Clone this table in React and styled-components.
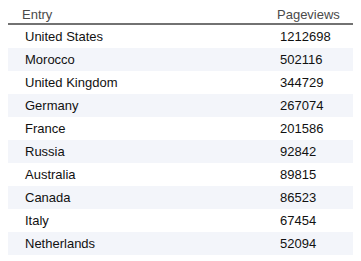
import React from "react";
import styled, { createGlobalStyle } from "styled-components";

const Global = createGlobalStyle`
	body {
		margin: 0 8px;
		background: #fff;
		font-family: "Liberation Sans", Arial, sans-serif;
		font-size: 13px;
	}
`;

const Table = styled.table`
	width: 347px;
	border-collapse: collapse;
	table-layout: fixed;
`;

const Head = styled.th`
	text-align: left;
	font-weight: normal;
	color: #4a4a4a;
	line-height: 15px;
	padding: 7px 0 1px 14px;
	border-bottom: 2px solid #727272;
	width: ${(p) => p.$w || "auto"};
`;

const Row = styled.tr`
	background: ${(p) => (p.$alt ? "#f3f5fa" : "#fff")};
`;

const Cell = styled.td`
	height: 23px;
	padding: 0 0 0 17px;
	line-height: 23px;
	color: #111;
`;

const data = [
	["United States", 1212698],
	["Morocco", 502116],
	["United Kingdom", 344729],
	["Germany", 267074],
	["France", 201586],
	["Russia", 92842],
	["Australia", 89815],
	["Canada", 86523],
	["Italy", 67454],
	["Netherlands", 52094],
];

export default function App() {
	return (
		<>
			<Global />
			<Table>
				<thead>
					<tr>
						<Head>Entry</Head>
						<Head $w="78px">Pageviews</Head>
					</tr>
				</thead>
				<tbody>
					{data.map(([name, views], i) => (
						<Row key={name} $alt={i % 2 === 1}>
							<Cell>{name}</Cell>
							<Cell>{views}</Cell>
						</Row>
					))}
				</tbody>
			</Table>
		</>
	);
}
